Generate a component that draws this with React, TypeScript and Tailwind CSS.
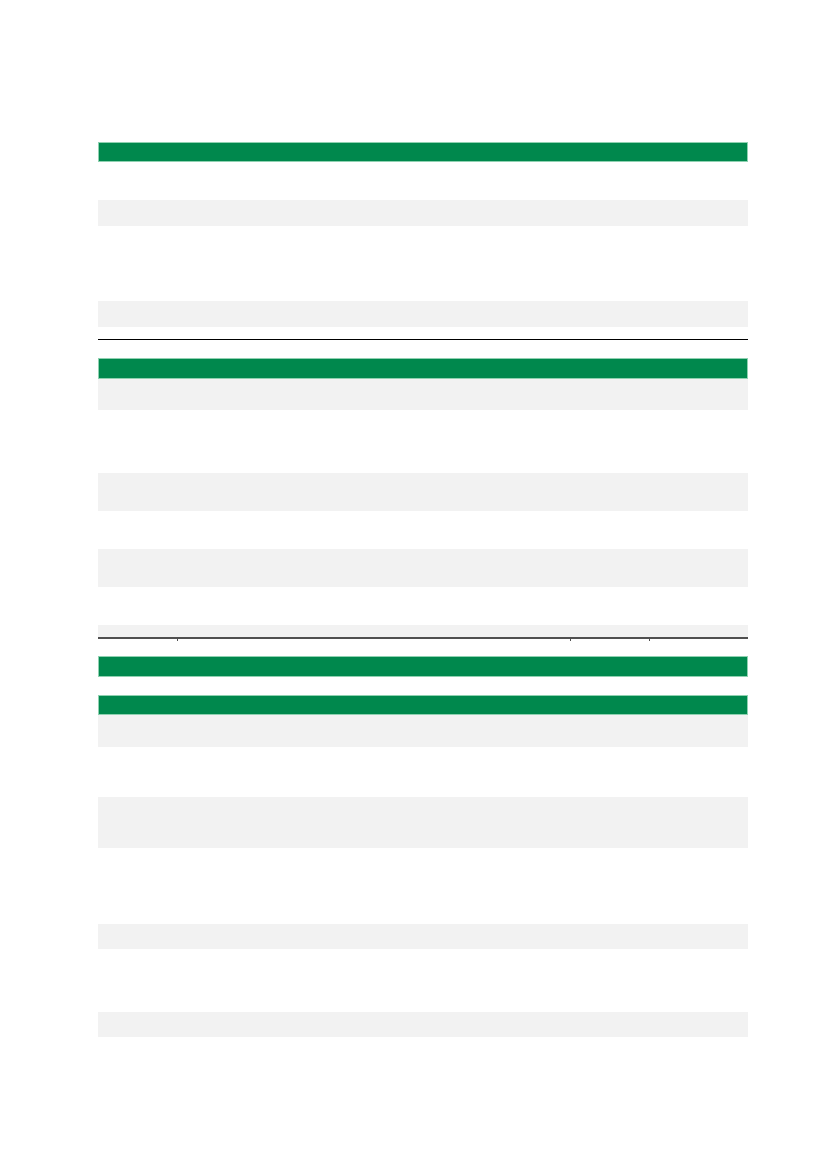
import React from "react"

type Row = { h: string; gray: boolean }

function Header({ h }: { h: string }) {
  return <div className={`${h} w-full bg-[#00884d] border border-[#8fd1b1]`} />
}

function Rows({ rows }: { rows: Row[] }) {
  return (
    <div className="flex flex-col">
      {rows.map((r, i) => (
        <div key={i} className={`${r.h} w-full ${r.gray ? "bg-[#f2f2f2]" : "bg-white"}`} />
      ))}
    </div>
  )
}

const firstRows: Row[] = [
  { h: "h-[38px]", gray: false },
  { h: "h-[26px]", gray: true },
  { h: "h-[75px]", gray: false },
  { h: "h-[26px]", gray: true },
]

const secondRows: Row[] = [
  { h: "h-[31px]", gray: true },
  { h: "h-[63px]", gray: false },
  { h: "h-[38px]", gray: true },
  { h: "h-[38px]", gray: false },
  { h: "h-[38px]", gray: true },
  { h: "h-[38px]", gray: false },
  { h: "h-[12px]", gray: true },
]

const thirdRows: Row[] = [
  { h: "h-[32px]", gray: true },
  { h: "h-[50px]", gray: false },
  { h: "h-[51px]", gray: true },
  { h: "h-[76px]", gray: false },
  { h: "h-[25px]", gray: true },
  { h: "h-[63px]", gray: false },
  { h: "h-[25px]", gray: true },
]

// bottom rule of the second table, with small ticks at the column edges
function TickRule() {
  const cols = ["w-[79px]", "w-[393px]", "w-[79px]", "flex-1"]
  return (
    <div className="flex w-full">
      {cols.map((w, i) => (
        <div key={i} className={`${w} h-[4px] border-t-2 border-[#505050]`}>
          {i > 0 && <div className="h-[2px] w-px bg-[#505050]" />}
        </div>
      ))}
    </div>
  )
}

export default function App() {
  return (
    <div className="min-h-[1169px] w-full bg-white font-['Liberation_Sans',sans-serif]">
      <div className="ml-[98px] flex w-[650px] flex-col pt-[142px]">
        <Header h="h-[20px]" />
        <Rows rows={firstRows} />
        <div className="mt-[12px] h-px w-full bg-black" />

        <div className="mt-[18px]">
          <Header h="h-[21px]" />
          <Rows rows={secondRows} />
          <TickRule />
        </div>

        <div className="mt-[15px]">
          <Header h="h-[21px]" />
        </div>

        <div className="mt-[18px]">
          <Header h="h-[20px]" />
          <Rows rows={thirdRows} />
        </div>
      </div>
    </div>
  )
}
